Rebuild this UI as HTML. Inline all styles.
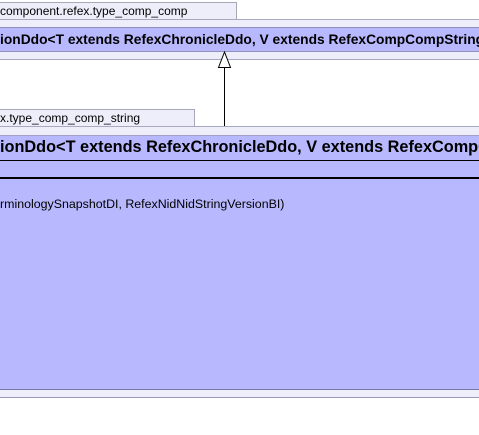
<!DOCTYPE html>
<html><head><style>
body{margin:0;width:479px;height:435px;background:#fff;position:relative;overflow:hidden;font-family:"Liberation Sans",sans-serif}
div{position:absolute;box-sizing:border-box;overflow:hidden}
.tab{background:#eeeefa;border:1px solid #a8a8b8;border-left:none;font-size:12px;line-height:16px;padding-left:0;white-space:nowrap;color:#000}
.band{background:#eeeefa;left:0;width:479px}
.hd{background:#b8b8ff;left:0;width:479px;white-space:nowrap;font-weight:bold;color:#000}
</style></head><body>
<div class="tab" style="left:0;top:2px;width:237px;height:18px;">component.refex.type_comp_comp</div>
<div class="band" style="top:19px;height:41px;border-top:1px solid #a8a8c0;border-bottom:1px solid #a8a8c0"></div>
<div class="hd" style="top:27px;height:25px;border-top:1px solid #9090b8;border-bottom:1px solid #9090b8;font-size:13.8px;line-height:24px;">ionDdo&lt;T extends RefexChronicleDdo, V extends RefexCompCompString</div>
<svg style="position:absolute;left:0;top:0" width="479" height="435">
<line x1="224.5" y1="67" x2="224.5" y2="135" stroke="#000" stroke-width="1"/>
<polygon points="224.5,52 218.5,67.5 230.5,67.5" fill="#fff" stroke="#000" stroke-width="1"/>
</svg>
<div class="tab" style="left:0;top:109px;width:195px;height:18px;">x.type_comp_comp_string</div>
<div class="band" style="top:126px;height:272px;border-top:1px solid #a8a8c0;border-bottom:1px solid #9898b8"></div>
<div class="hd" style="top:135px;height:255px;border-bottom:1px solid #7878a8;"></div>
<div style="left:0;top:135px;width:479px;height:26px;border-top:1px solid #a0a0c8;border-bottom:1px solid #000;font-weight:bold;font-size:16.3px;line-height:23px;white-space:nowrap">ionDdo&lt;T extends RefexChronicleDdo, V extends RefexCompCompString</div>
<div style="left:0;top:177px;width:479px;height:2px;background:#000"></div>
<div style="left:0;top:196px;width:479px;font-size:12.4px;line-height:16px;white-space:nowrap">rminologySnapshotDI, RefexNidNidStringVersionBI)</div>
</body></html>
